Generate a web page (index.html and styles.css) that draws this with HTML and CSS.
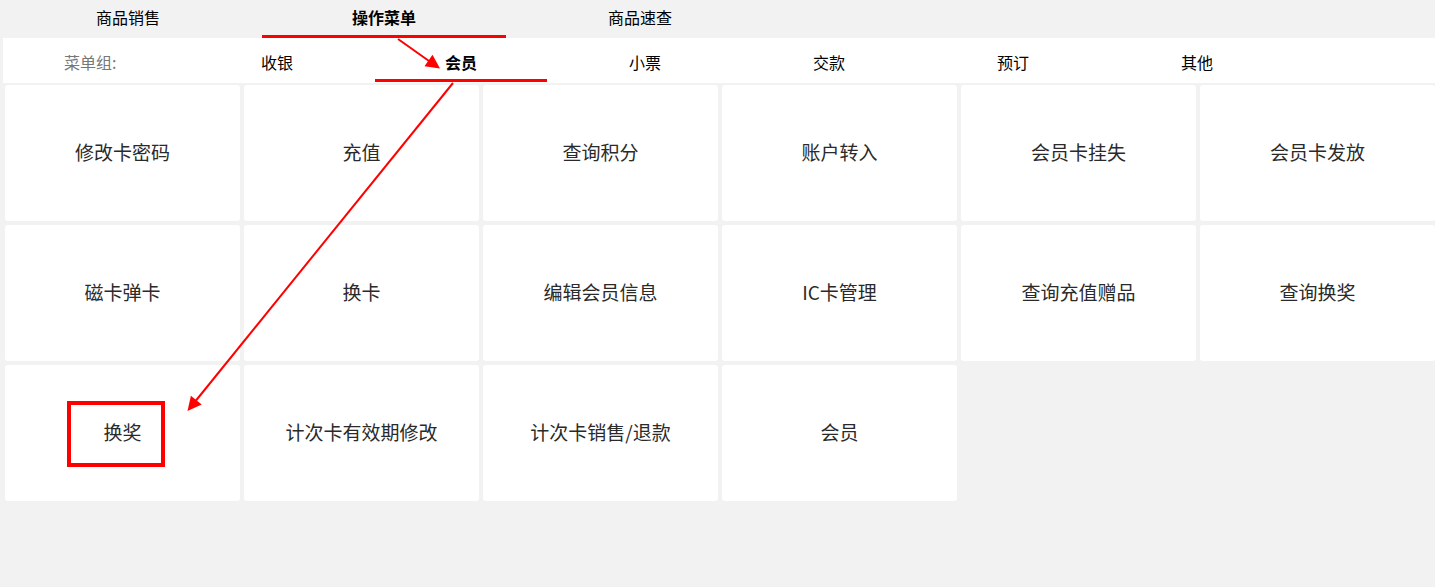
FILE: index.html
```html
<!DOCTYPE html>
<html lang="zh-CN">
<head>
<meta charset="utf-8">
<title>操作菜单</title>
<link rel="stylesheet" href="styles.css">
</head>
<body>
<div class="page">
  <nav class="tabs">
    <div class="tab"><span class="tab-label">商品销售</span></div>
    <div class="tab active"><span class="tab-label">操作菜单</span></div>
    <div class="tab"><span class="tab-label">商品速查</span></div>
  </nav>
  <div class="menu-bar">
    <div class="menu-title">菜单组:</div>
    <div class="menu-item"><span class="menu-label">收银</span></div>
    <div class="menu-item active"><span class="menu-label">会员</span></div>
    <div class="menu-item"><span class="menu-label">小票</span></div>
    <div class="menu-item"><span class="menu-label">交款</span></div>
    <div class="menu-item"><span class="menu-label">预订</span></div>
    <div class="menu-item"><span class="menu-label">其他</span></div>
  </div>
  <div class="grid">
    <div class="cell">修改卡密码</div>
    <div class="cell">充值</div>
    <div class="cell">查询积分</div>
    <div class="cell">账户转入</div>
    <div class="cell">会员卡挂失</div>
    <div class="cell">会员卡发放</div>
    <div class="cell">磁卡弹卡</div>
    <div class="cell">换卡</div>
    <div class="cell">编辑会员信息</div>
    <div class="cell">IC卡管理</div>
    <div class="cell">查询充值赠品</div>
    <div class="cell">查询换奖</div>
    <div class="cell">换奖</div>
    <div class="cell">计次卡有效期修改</div>
    <div class="cell">计次卡销售/退款</div>
    <div class="cell">会员</div>
  </div>
  <svg class="annotations" width="1435" height="587" viewBox="0 0 1435 587" xmlns="http://www.w3.org/2000/svg">
    <line x1="398" y1="39" x2="429" y2="61" stroke="#ff0000" stroke-width="2"/>
    <polygon points="440,68.5 424.5,66.2 432.5,54.8" fill="#ff0000"/>
    <line x1="453" y1="83" x2="196" y2="400.5" stroke="#ff0000" stroke-width="2"/>
    <polygon points="187.5,411 190.9,395.7 201.7,404.5" fill="#ff0000"/>
    <rect x="69" y="403" width="94" height="62" fill="none" stroke="#ff0000" stroke-width="4"/>
  </svg>
</div>
</body>
</html>
```

FILE: styles.css
```css
html, body {
  margin: 0;
  padding: 0;
}
body {
  background: #f2f2f2;
  font-family: "Noto Sans CJK SC", "Noto Sans", sans-serif;
  color: #000;
}
.page {
  position: relative;
  width: 1435px;
  height: 587px;
  overflow: hidden;
}
.tabs {
  display: flex;
  height: 38px;
}
.tab {
  width: 256px;
  height: 38px;
}
.tab-label {
  display: block;
  margin: 0 6px;
  height: 35px;
  line-height: 35px;
  text-align: center;
  font-size: 16px;
  border-bottom: 3px solid transparent;
}
.tab.active .tab-label {
  border-bottom-color: #ff0000;
  font-weight: bold;
}
.menu-bar {
  display: flex;
  margin-left: 3px;
  height: 45px;
  background: #fff;
}
.menu-title {
  width: 121px;
  padding-left: 61px;
  padding-top: 7px;
  line-height: 34px;
  font-size: 16px;
  color: #777;
}
.menu-item {
  width: 184px;
}
.menu-label {
  display: block;
  margin: 0 6px;
  height: 34px;
  padding-top: 7px;
  line-height: 34px;
  text-align: center;
  font-size: 16px;
  border-bottom: 3px solid transparent;
}
.menu-item.active .menu-label {
  border-bottom-color: #ff0000;
  font-weight: bold;
}
.grid {
  display: grid;
  grid-template-columns: repeat(6, 235px);
  grid-auto-rows: 136px;
  gap: 4px;
  margin: 2px 0 0 5px;
}
.cell {
  display: flex;
  align-items: center;
  justify-content: center;
  padding-bottom: 3px;
  box-sizing: border-box;
  background: #fff;
  border-radius: 3px;
  font-size: 19px;
  color: #2a2a2a;
}
.annotations {
  position: absolute;
  top: 0;
  left: 0;
  pointer-events: none;
}
```
